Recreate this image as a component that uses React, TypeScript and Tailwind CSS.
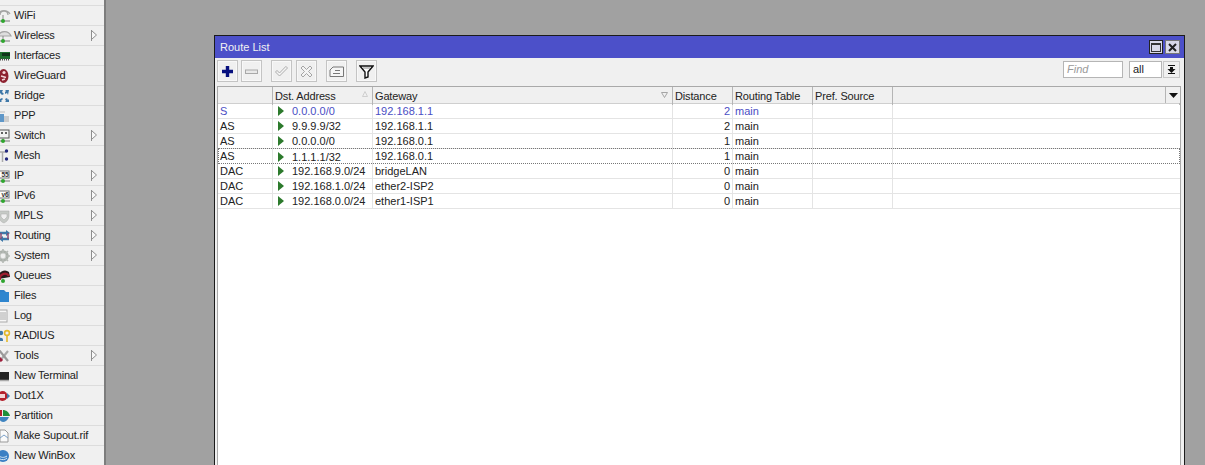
import React from 'react';

type MenuItem = { label: string; icon: React.ReactNode; sub?: boolean };

const Dot = () => <circle cx="3" cy="13" r="2" fill="#2fa52f" />;

const menu: MenuItem[] = [
  { label: 'WiFi', icon: <><path d="M-2 6a7 7 0 0 1 12 0M0 7a4 4 0 0 1 8 0" fill="none" stroke="#a5a5a5" strokeWidth="1.3" /><path d="M3 7v6" stroke="#888" /><path d="M0 13h10" stroke="#777" /><Dot /></> },
  { label: 'Wireless', icon: <><path d="M-2 8a7 7 0 0 1 13 0z" fill="#dedede" stroke="#a5a5a5" strokeWidth="1.2" /><path d="M3 8v5" stroke="#888" /><path d="M0 13h10" stroke="#777" /><Dot /></>, sub: true },
  { label: 'Interfaces', icon: <><rect x="-1" y="4" width="11" height="7" fill="#1d6e2d" /><rect x="2" y="5" width="8" height="3" fill="#10331a" /><path d="M0 11.5h10" stroke="#4c4c4c" strokeDasharray="1 1" strokeWidth="2" /></> },
  { label: 'WireGuard', icon: <><ellipse cx="3.5" cy="8" rx="5" ry="7" fill="#8d2230" /><circle cx="4" cy="4.5" r="1.6" fill="#f2d6d8" /><path d="M1 8l5 1.5M2 12l3-1" stroke="#f2d6d8" strokeWidth="1.5" /></> },
  { label: 'Bridge', icon: <><path d="M-1 2h4l-1 2 2 2-2 1-2-2-1 1zM9 2l-1 5-1-2-2 1V4l1-1-1-1zM-1 14v-4l1 1 2-1 1 1-2 2 1 1zM9 14H5l1-1-1-2 2-1 1 2 1-1z" fill="#3f78a8" /></> },
  { label: 'PPP', icon: <><rect x="-1" y="6" width="5" height="8" fill="#5f97c8" /><path d="M4 9h5M4 11h5M4 13h5" stroke="#a8a8a8" /><path d="M0 4h5" stroke="#bbb" /></> },
  { label: 'Switch', sub: true, icon: <><rect x="-1" y="2" width="10" height="8" fill="#f2f2f2" stroke="#555" /><path d="M1 5h2M5 5h2" stroke="#333" strokeWidth="1.4" /><path d="M3 10v3" stroke="#888" /><path d="M0 13h10" stroke="#777" /><Dot /></> },
  { label: 'Mesh', icon: <><path d="M0 4h6M2.5 4v10" stroke="#aaa" strokeWidth="1.5" /><circle cx="6.5" cy="3" r="1.7" fill="#23287d" /><circle cx="6.5" cy="11" r="1.7" fill="#23287d" /></> },
  { label: 'IP', sub: true, icon: <><rect x="-1" y="3" width="10" height="7" fill="#fff" stroke="#777" /><text x="1.5" y="9" fontSize="6.5" fontWeight="700" fill="#333" fontFamily="Liberation Sans">55</text><path d="M0 13h10" stroke="#777" /><Dot /></> },
  { label: 'IPv6', sub: true, icon: <><rect x="-1" y="3" width="10" height="7" fill="#fff" stroke="#777" /><text x="1.5" y="9" fontSize="6.5" fontWeight="700" fill="#333" fontFamily="Liberation Sans">v6</text><path d="M0 13h10" stroke="#777" /><Dot /></> },
  { label: 'MPLS', sub: true, icon: <path d="M-1 3h10v5c0 4-3 6-5 7-3-1-5-3-5-7z M1 6v3l3 3 3-3V6z" fill="#c6cac6" fillRule="evenodd" stroke="#aaa" strokeWidth=".5" /> },
  { label: 'Routing', sub: true, icon: <><path d="M0 5h7M2 11h7" stroke="#3f78a8" strokeWidth="2.4" /><path d="M6 2l4 3-4 3zM3 8l-4 3 4 3z" fill="#3f78a8" /><path d="M1 5v6M8 5v6" stroke="#8a4a70" strokeWidth="1.5" /></> },
  { label: 'System', sub: true, icon: <><circle cx="3" cy="8" r="4.5" fill="none" stroke="#aab0aa" strokeWidth="2.6" /><path d="M3 1v14M-4 8h14M-2 3l10 10M8 3L-2 13" stroke="#b5b9b5" strokeWidth="1.6" /><circle cx="3" cy="8" r="2.4" fill="#f0f0f0" /></> },
  { label: 'Queues', icon: <><path d="M-2 11a7 8 0 0 1 11-7l1 5z" fill="#2a1c1c" /><path d="M0 12a5 5 0 0 1 9-4" fill="none" stroke="#a02030" strokeWidth="2.2" /><Dot /></> },
  { label: 'Files', icon: <><path d="M-1 2h5l2 2h-7z" fill="#2f80c8" /><rect x="-1" y="4" width="10" height="10" fill="#2f86cf" /></> },
  { label: 'Log', icon: <><rect x="-1" y="2" width="8" height="12" fill="#f7f7f7" stroke="#aaa" /><path d="M0 5h6M0 7h6M0 9h6M0 11h6" stroke="#aaa" /></> },
  { label: 'RADIUS', icon: <><circle cx="1" cy="5" r="2.2" fill="#3f78a8" /><path d="M-2 13c0-4 5-4 5-1v1z" fill="#3f78a8" /><circle cx="7" cy="5" r="2.4" fill="none" stroke="#e4b92b" strokeWidth="1.6" /><path d="M7 8v6" stroke="#e4b92b" strokeWidth="1.6" /></> },
  { label: 'Tools', sub: true, icon: <><path d="M-1 14L8 3" stroke="#a9a9a9" strokeWidth="2.2" /><path d="M-1 2l9 11" stroke="#999" strokeWidth="2.2" /><path d="M-1 10l3 3" stroke="#a01d3a" strokeWidth="3" /></> },
  { label: 'New Terminal', icon: <><rect x="-1" y="4" width="10" height="8" fill="#222" /><path d="M-1 12.5h10" stroke="#aaa" strokeWidth="1.5" /></> },
  { label: 'Dot1X', icon: <><circle cx="2.5" cy="8" r="5" fill="#b3202c" /><rect x="0" y="6" width="5" height="4" fill="#f4d6d6" /><path d="M7 5l3 3-3 3z" fill="#3f78a8" /></> },
  { label: 'Partition', icon: <><path d="M-1 2h3v6h-3z" fill="#b3202c" /><path d="M3 2c3 0 6 2 7 6H3z" fill="#1f8f3a" /><path d="M-1 9h10c-1 3-4 5-6 5-2 0-4-2-4-5z" fill="#3f84c0" /></> },
  { label: 'Make Supout.rif', icon: <><path d="M0 2h5l3 3v9H0z" fill="#fafafa" stroke="#999" /><path d="M0 10l4-3 4 3" fill="none" stroke="#7aa0c8" /></> },
  { label: 'New WinBox', icon: <><circle cx="3" cy="8" r="6" fill="#3a7fc4" /><path d="M-2 7c3 3 6 3 9 1M0 11c2 1 5 1 7-1" stroke="#d8e8f6" fill="none" /></> },
];

const SubArrow = () => (
  <svg width="6" height="11" viewBox="0 0 6 11" className="absolute left-[91px] top-[4px]">
    <path d="M.5 0v11M.5 .5L5.5 5 1 9" fill="#f8f8f8" stroke="#8e8e8e" />
  </svg>
);

const routes = [
  { flags: 'S', dst: '0.0.0.0/0', gw: '192.168.1.1', dist: 2, active: true },
  { flags: 'AS', dst: '9.9.9.9/32', gw: '192.168.1.1', dist: 2 },
  { flags: 'AS', dst: '0.0.0.0/0', gw: '192.168.0.1', dist: 1 },
  { flags: 'AS', dst: '1.1.1.1/32', gw: '192.168.0.1', dist: 1, focus: true },
  { flags: 'DAC', dst: '192.168.9.0/24', gw: 'bridgeLAN', dist: 0 },
  { flags: 'DAC', dst: '192.168.1.0/24', gw: 'ether2-ISP2', dist: 0 },
  { flags: 'DAC', dst: '192.168.0.0/24', gw: 'ether1-ISP1', dist: 0 },
];

const COLS = 'grid grid-cols-[55px_100px_300px_60px_80px_80px_1fr]';
const BTN = 'w-[21px] h-[22px] flex items-center justify-center border border-[#c4c4c4] outline outline-1 -outline-offset-2 outline-[#f8f8f8] bg-[#f0f0f0]';

const ToolIcon = ({ children }: { children: React.ReactNode }) => (
  <div className={BTN}>
    <svg width="15" height="15" viewBox="0 0 15 15">{children}</svg>
  </div>
);

export default function App() {
  return (
    <div className="w-[1205px] h-[465px] overflow-hidden flex bg-[#a1a1a1] font-['Liberation_Sans',Arial,sans-serif] text-[11px] text-[#222]">
      <div className="w-[106px] h-full shrink-0 bg-[#f0f0f0] border-r-2 border-[#7d7d7d] pt-[5px]">
        {menu.map(m => (
          <div key={m.label} className="relative h-[20px] border-t border-[#dcdcdc] flex items-center">
            <svg width="14" height="16" viewBox="0 0 14 16" className="shrink-0">
              {m.icon}
            </svg>
            <span className="leading-none tracking-[-0.2px]">{m.label}</span>
            {m.sub && <SubArrow />}
          </div>
        ))}
      </div>

      <div className="flex-1 pl-[108px] pt-[35px]">
        <div className="w-[971px] h-[440px] border border-[#1b1b1b] border-b-0 bg-[#f0f0f0] flex flex-col">
          <div className="h-[22px] bg-[#4c50c9] flex items-center justify-between pl-[5px] pr-[4px] text-[#f2f2f2]">
            <span>Route List</span>
            <div className="flex gap-[2px]">
              <div className="w-[14px] h-[14px] bg-[#d9d9e8] border border-[#222] flex items-center justify-center">
                <div className="w-[10px] h-[9px] border border-[#333] border-t-2" />
              </div>
              <div className="w-[15px] h-[14px] bg-[#d9d9e8] border border-[#777] flex items-center justify-center">
                <svg width="9" height="9" viewBox="0 0 9 9"><path d="M1 1l7 7M8 1L1 8" stroke="#222" strokeWidth="2" /></svg>
              </div>
            </div>
          </div>

          <div className="h-[28px] pl-[2px] pr-[4px] pt-[2px] flex items-start">
            <div className="flex gap-[3px]">
              <ToolIcon><path d="M7.5 2v11M2 7.5h11" stroke="#07107e" strokeWidth="3.4" /></ToolIcon>
              <ToolIcon><rect x="1.5" y="6" width="12" height="3.5" fill="#e8e8e8" stroke="#a8a8a8" /></ToolIcon>
            </div>
            <div className="flex gap-[4px] ml-[9px]">
              <ToolIcon><path d="M1.5 8l4 4 8-8-1.6-1.6L5.5 9 3 6.4z" fill="#f4f4f4" stroke="#adadad" /></ToolIcon>
              <ToolIcon><path d="M2 4l2-2 3.5 3.5L11 2l2 2-3.5 3.5L13 11l-2 2-3.5-3.5L4 13l-2-2 3.5-3.5z" fill="#f4f4f4" stroke="#a5a5a5" /></ToolIcon>
            </div>
            <div className="ml-[9px]">
              <ToolIcon><path d="M1 12.5V6l3-3h10.5v9.5z" fill="#f5f5f5" stroke="#777" /><path d="M6 6.5h5M4 9.5h7" stroke="#777" /></ToolIcon>
            </div>
            <div className="ml-[9px]">
              <ToolIcon><path d="M1 2h13L9 8v5l-3 1V8z" fill="#fff" stroke="#111" strokeWidth="1.4" /><path d="M4 4h7" stroke="#888" /></ToolIcon>
            </div>
            <div className="ml-auto flex items-center mt-[1px]">
              <div className="w-[60px] h-[17px] bg-white border border-[#b5b5b5] pl-[3px] italic text-[#9a9a9a] leading-[15px]">Find</div>
              <div className="w-[33px] h-[17px] bg-white border border-[#b5b5b5] ml-[6px] pl-[3px] leading-[15px]">all</div>
              <div className="w-[17px] h-[17px] ml-[1px] border border-[#c8c8c8] flex items-center justify-center">
                <svg width="9" height="9" viewBox="0 0 9 9"><path d="M1 .5h7" stroke="#111" /><path d="M3 2h3v2h2.5L4.5 8 .5 4H3z" fill="#111" /><path d="M1 8.5h7" stroke="#111" /></svg>
              </div>
            </div>
          </div>

          <div className="flex-1 ml-[2px] mr-[3px] bg-white border border-[#a9a9a9] border-b-0">
            <div className={`${COLS} h-[17px] bg-[#f0f0f0] border-b border-[#cfcfcf] relative`}>
              {['', 'Dst. Address', 'Gateway', 'Distance', 'Routing Table', 'Pref. Source', ''].map((h, i) => (
                <div key={i} className="relative border-r border-[#b5b5b5] last:border-r-0 pl-[2px] leading-[18px] whitespace-nowrap tracking-[-0.15px]">
                  {h}
                  {i === 1 && (
                    <svg width="6" height="6" viewBox="0 0 6 6" className="absolute right-[4px] top-[4px]"><path d="M3 .5L5.5 5.5H.5z" fill="none" stroke="#cfcfcf" /></svg>
                  )}
                  {i === 2 && (
                    <svg width="7" height="6" viewBox="0 0 7 6" className="absolute right-[4px] top-[5px]"><path d="M.5 .5h6L3.5 5.5z" fill="none" stroke="#a5a5a5" /></svg>
                  )}
                </div>
              ))}
              <div className="absolute right-0 top-0 h-[16px] w-[15px] border-l border-[#b5b5b5] bg-[#f0f0f0] flex items-center justify-center">
                <svg width="9" height="5" viewBox="0 0 9 5"><path d="M0 0h9L4.5 5z" fill="#111" /></svg>
              </div>
            </div>
            {routes.map((r, i) => (
              <div
                key={i}
                className={`${COLS} leading-[14px] ${r.focus ? 'h-[16px] mt-[-1px] pt-[1px] outline outline-1 outline-dotted -outline-offset-1 outline-[#777]' : 'h-[15px] border-b border-[#e4e4e4]'} ${r.active ? 'text-[#4a4ec4]' : ''}`}
              >
                <div className="border-r border-[#e4e4e4] pl-[2px]">{r.flags}</div>
                <div className="border-r border-[#e4e4e4] pl-[5px] flex items-center gap-[8px]">
                  <svg width="6" height="10" viewBox="0 0 6 10" className="shrink-0"><path d="M0 0l6 5-6 5z" fill="#2c7a2c" /></svg>
                  <span>{r.dst}</span>
                </div>
                <div className="border-r border-[#e4e4e4] pl-[2px]">{r.gw}</div>
                <div className="border-r border-[#e4e4e4] pr-[2px] text-right">{r.dist}</div>
                <div className="border-r border-[#e4e4e4] pl-[2px]">main</div>
                <div className="border-r border-[#e4e4e4]" />
                <div />
              </div>
            ))}
          </div>
        </div>
      </div>
    </div>
  );
}
